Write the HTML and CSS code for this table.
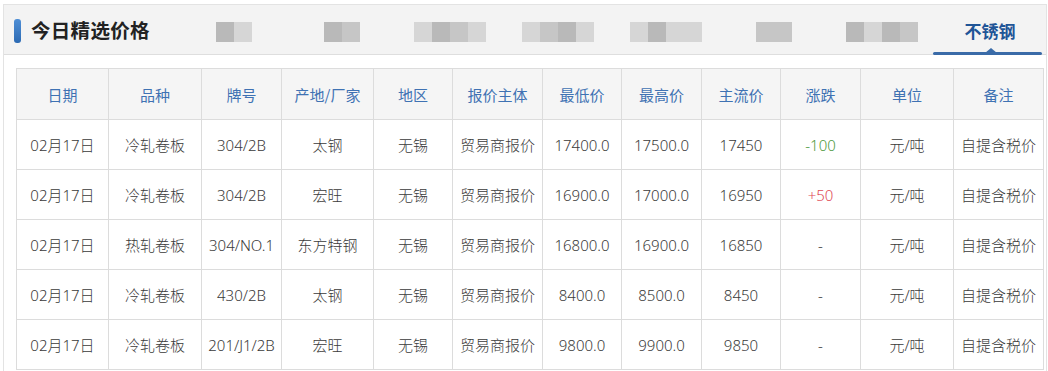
FILE: index.html
```html
<!DOCTYPE html>
<html lang="zh-CN">
<head>
<meta charset="utf-8">
<title>今日精选价格</title>
<link rel="stylesheet" href="styles.css">
</head>
<body>
<div class="panel">
  <div class="head">
    <span class="bar"></span>
    <h2 class="title">今日精选价格</h2>
    <ul class="tabs">
      <li class="tab"><span class="mosaic w2"><i class="c1"></i><i class="c3"></i></span></li>
      <li class="tab"><span class="mosaic w2"><i class="c1"></i><i class="c2"></i></span></li>
      <li class="tab"><span class="mosaic w4"><i class="c3"></i><i class="c1"></i><i class="c2"></i><i class="c3"></i></span></li>
      <li class="tab"><span class="mosaic w4"><i class="c3"></i><i class="c2"></i><i class="c1"></i><i class="c3"></i></span></li>
      <li class="tab"><span class="mosaic w4"><i class="c3"></i><i class="c1"></i><i class="c3"></i><i class="c3"></i></span></li>
      <li class="tab"><span class="mosaic w2"><i class="c2"></i><i class="c2"></i></span></li>
      <li class="tab"><span class="mosaic w4"><i class="c1"></i><i class="c3"></i><i class="c1"></i><i class="c2"></i></span></li>
      <li class="tab active">不锈钢</li>
    </ul>
  </div>
  <div class="body">
    <table class="prices">
      <colgroup>
        <col class="k92"><col class="k93"><col class="k80"><col class="k92"><col class="k79"><col class="k90">
        <col class="k79"><col class="k80"><col class="k79"><col class="k80"><col class="k93"><col class="k90">
      </colgroup>
      <thead>
        <tr><th>日期</th><th>品种</th><th>牌号</th><th>产地/厂家</th><th>地区</th><th>报价主体</th><th>最低价</th><th>最高价</th><th>主流价</th><th>涨跌</th><th>单位</th><th>备注</th></tr>
      </thead>
      <tbody>
        <tr><td>02月17日</td><td>冷轧卷板</td><td>304/2B</td><td>太钢</td><td>无锡</td><td>贸易商报价</td><td>17400.0</td><td>17500.0</td><td>17450</td><td class="down">-100</td><td>元/吨</td><td>自提含税价</td></tr>
        <tr><td>02月17日</td><td>冷轧卷板</td><td>304/2B</td><td>宏旺</td><td>无锡</td><td>贸易商报价</td><td>16900.0</td><td>17000.0</td><td>16950</td><td class="up">+50</td><td>元/吨</td><td>自提含税价</td></tr>
        <tr><td>02月17日</td><td>热轧卷板</td><td>304/NO.1</td><td>东方特钢</td><td>无锡</td><td>贸易商报价</td><td>16800.0</td><td>16900.0</td><td>16850</td><td>-</td><td>元/吨</td><td>自提含税价</td></tr>
        <tr><td>02月17日</td><td>冷轧卷板</td><td>430/2B</td><td>太钢</td><td>无锡</td><td>贸易商报价</td><td>8400.0</td><td>8500.0</td><td>8450</td><td>-</td><td>元/吨</td><td>自提含税价</td></tr>
        <tr><td>02月17日</td><td>冷轧卷板</td><td>201/J1/2B</td><td>宏旺</td><td>无锡</td><td>贸易商报价</td><td>9800.0</td><td>9900.0</td><td>9850</td><td>-</td><td>元/吨</td><td>自提含税价</td></tr>
      </tbody>
    </table>
  </div>
</div>
</body>
</html>
```

FILE: styles.css
```css
* { box-sizing: border-box; }
html, body { margin: 0; padding: 0; background: #fff; }
body {
  font-family: "Noto Sans", "Noto Sans CJK SC", sans-serif;
  color: #333;
  overflow: hidden;
}
.panel {
  margin: 4px 1px 0 3px;
  border: 1px solid #e3e3e3;
  border-bottom: none;
  height: 380px;
}
.head {
  height: 50px;
  background: #f3f3f3;
  border-bottom: 1px solid #dedede;
  display: flex;
  align-items: center;
  padding: 0 2px 0 10px;
  position: relative;
}
.bar {
  width: 7px;
  height: 24px;
  border-radius: 3px;
  background: linear-gradient(#4f8fd6, #2c6ab3);
  margin-top: 2px;
}
.title {
  margin: 0 0 0 10px;
  font-family: "Noto Sans CJK SC", sans-serif;
  font-size: 19.5px;
  font-weight: 700;
  color: #222;
  letter-spacing: 0.3px;
}
.tabs {
  list-style: none;
  margin: 0 0 0 auto;
  padding: 0;
  display: flex;
  height: 100%;
}
.tab {
  width: 108px;
  height: 100%;
  display: flex;
  align-items: center;
  justify-content: center;
  position: relative;
}
.mosaic {
  display: flex;
  height: 20px;
  margin-top: 4px;
  filter: blur(0.6px);
}
.mosaic i { display: block; width: 18px; height: 20px; }
.mosaic .c1 { background: #b9b9b9; }
.mosaic .c2 { background: #c6c6c6; }
.mosaic .c3 { background: #d6d6d6; }
.active {
  font-family: "Noto Sans CJK SC", sans-serif;
  font-size: 17px;
  font-weight: 700;
  color: #1f5597;
  padding-top: 2px;
}
.active::after {
  content: "";
  position: absolute;
  left: -3px;
  right: 2px;
  bottom: -1px;
  height: 3px;
  background: #3a6ba8;
  border-radius: 2px;
}
.active::before {
  content: "";
  position: absolute;
  left: 50%;
  margin-left: -5px;
  bottom: 1px;
  border-left: 6px solid transparent;
  border-right: 6px solid transparent;
  border-bottom: 5px solid #3a6ba8;
}
.body {
  padding: 13px 0 0 12px;
}
.prices {
  border-collapse: collapse;
  table-layout: fixed;
  width: 1027px;
  font-size: 15px;
}
.k92 { width: 92px; }
.k93 { width: 93px; }
.k80 { width: 80px; }
.k79 { width: 79px; }
.k90 { width: 90px; }
.prices th, .prices td {
  border: 1px solid #dcdcdc;
  text-align: center;
  padding: 0;
  white-space: nowrap;
  overflow: hidden;
}
.prices th {
  height: 51px;
  background: #f5f5f5;
  color: #3f72b3;
  font-weight: 400;
  font-family: "Noto Sans CJK SC", sans-serif;
}
.prices td {
  height: 50px;
  color: #3a3a3a;
  font-weight: 300;
}
.prices td.down { color: #4e9a40; }
.prices td.up { color: #e04a55; }
```
